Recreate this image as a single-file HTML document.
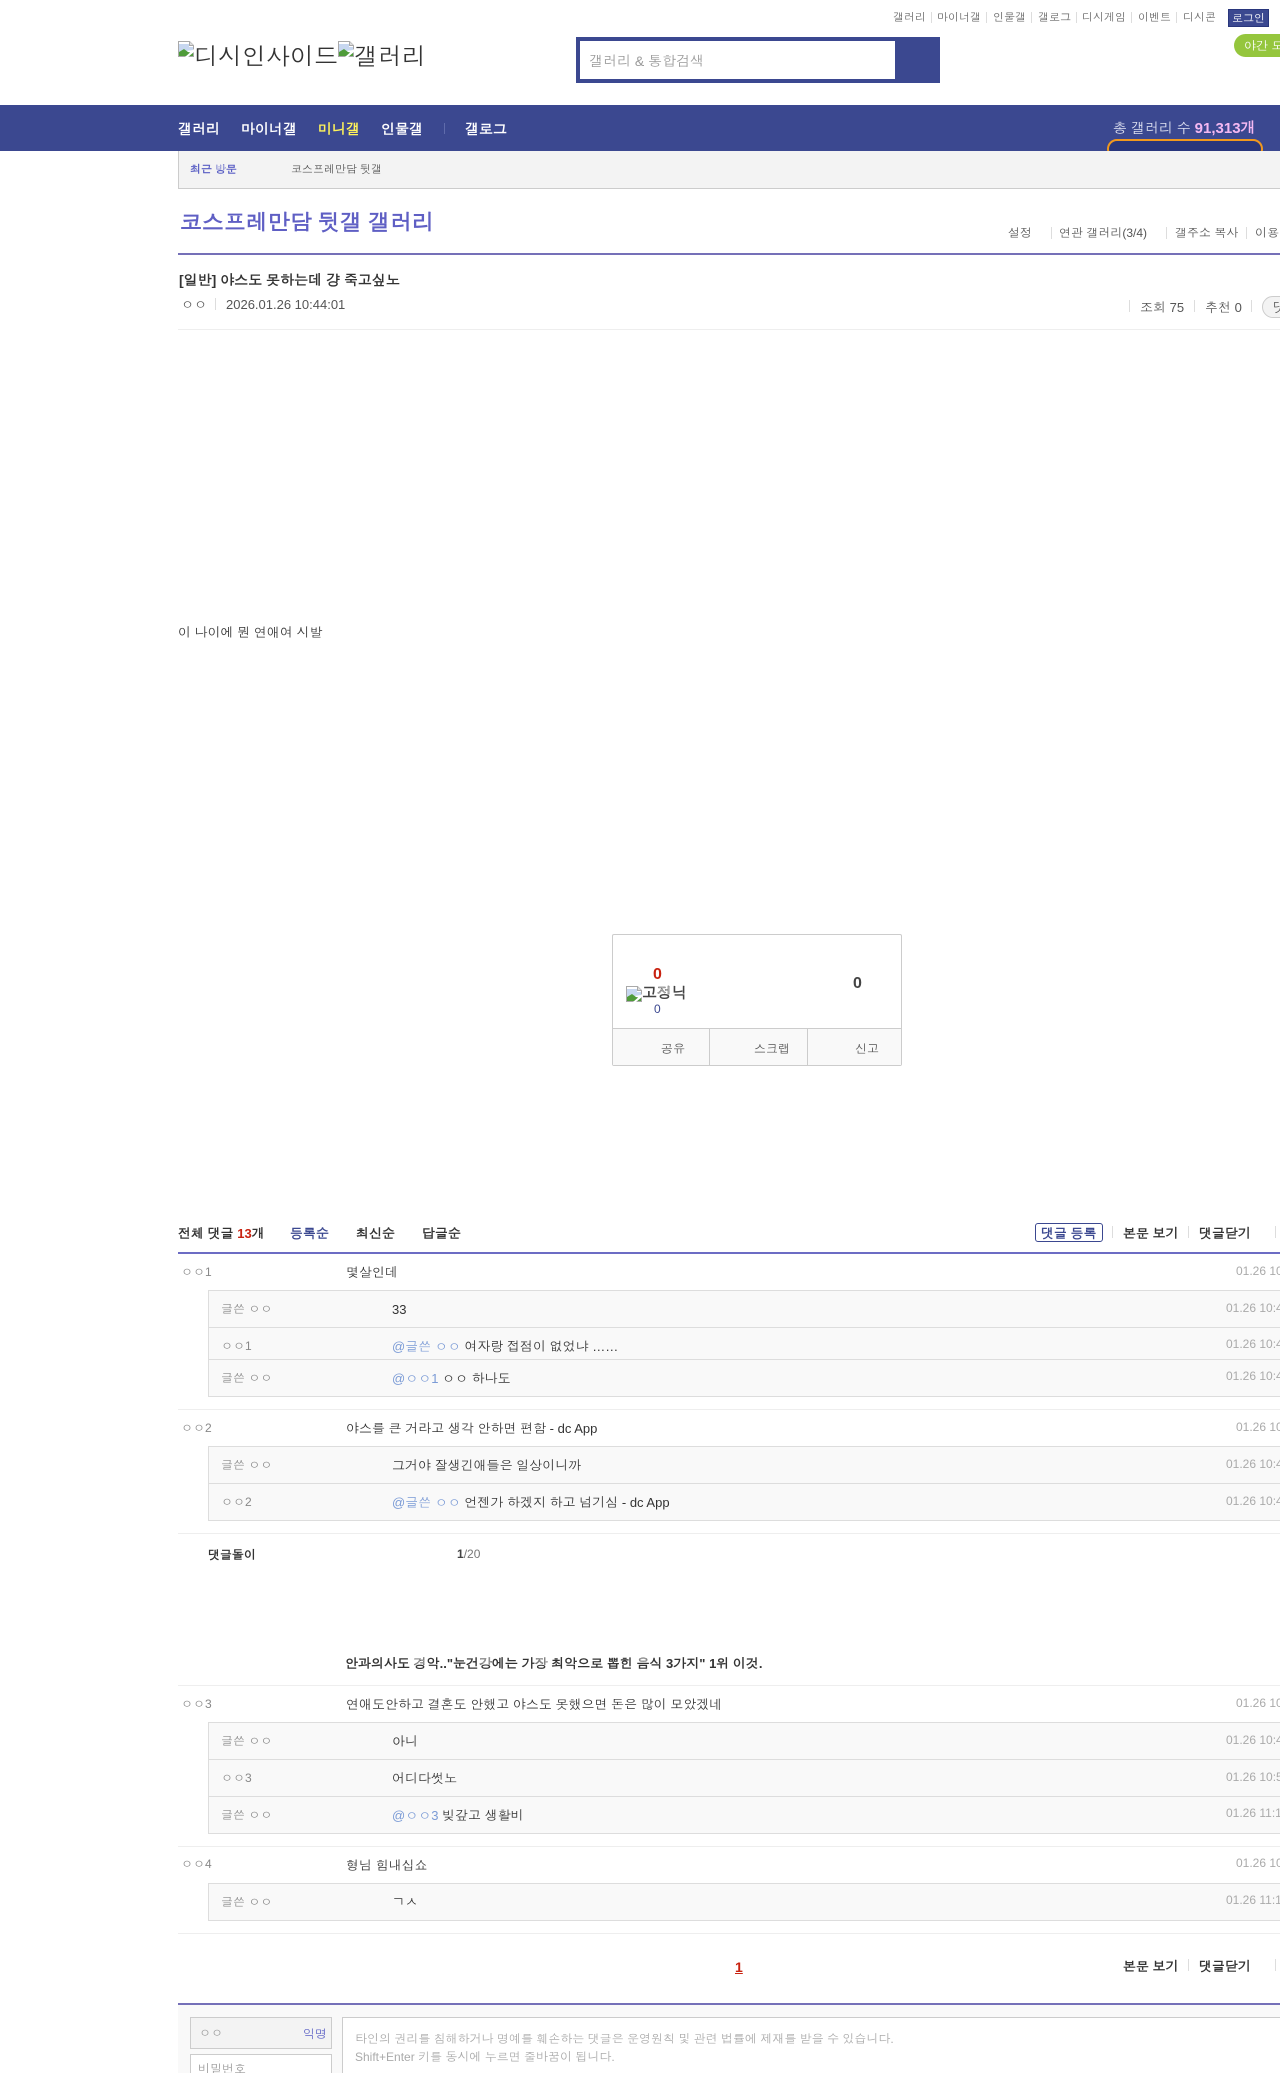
<!DOCTYPE html>
<html lang="ko"><head><meta charset="utf-8"><title>야스도 못하는데 걍 죽고싶노</title>
<style>
html,body{margin:0;padding:0;background:#fff;width:1280px;height:2073px;overflow:hidden}
#w{width:1280px;height:2073px;position:relative;overflow:hidden;font-family:"Liberation Sans",Dotum,sans-serif;font-size:13px;color:#333}
.t{position:absolute;white-space:nowrap;line-height:20px;height:20px}
.r{position:absolute}
.b{font-weight:bold}
.sep{position:absolute;width:1px;background:#ddd}
.top{font-size:11px;color:#666}
.n{font-size:14px;font-weight:bold;color:#fff}
.nm{font-size:12px;color:#888}
.dt{font-size:12px;color:#aaa}
.tx{font-size:13px;color:#333}
.at{color:#7b9bd6}
.rb{position:absolute;left:208px;right:-2px;background:#f9f9f9;border:1px solid #ddd;box-sizing:border-box}
.ln{position:absolute;left:178px;right:0;height:1px;background:#eee}
.il{position:absolute;left:209px;right:0;height:1px;background:#ddd}
.hd{font-size:13px;font-weight:bold;color:#333}
svg.bi{position:absolute;width:16px;height:16px}
</style></head><body><div id="w">

<svg width="0" height="0" style="position:absolute"><defs><symbol id="bk" viewBox="0 0 16 16"><path d="M.5.5h11l4 4v11H.5z" fill="#fff" stroke="#a9a9a9"/><path d="M11.5.5v4h4" fill="#ddd" stroke="#a9a9a9"/><path d="M1 3h10v3h4v3L1 11z" fill="#c7d7f0"/><path d="M1 15v-4l5-3 4 3 5 1v3z" fill="#4f9b3a"/><path d="M16 8 7 16h3l6-5z" fill="#fff"/></symbol></defs></svg>

<!-- top links -->
<div class="t top" style="left:893px;top:8px">갤러리</div><div class="sep" style="left:931px;top:12px;height:11px"></div>
<div class="t top" style="left:937px;top:8px">마이너갤</div><div class="sep" style="left:986px;top:12px;height:11px"></div>
<div class="t top" style="left:993px;top:8px">인물갤</div><div class="sep" style="left:1031px;top:12px;height:11px"></div>
<div class="t top" style="left:1038px;top:8px">갤로그</div><div class="sep" style="left:1076px;top:12px;height:11px"></div>
<div class="t top" style="left:1082px;top:8px">디시게임</div><div class="sep" style="left:1131px;top:12px;height:11px"></div>
<div class="t top" style="left:1138px;top:8px">이벤트</div><div class="sep" style="left:1176px;top:12px;height:11px"></div>
<div class="t top" style="left:1183px;top:8px">디시콘</div>
<div class="r" style="left:1228px;top:9px;width:41px;height:18px;background:#3b4890;border:1px solid #29367c;box-sizing:border-box"></div>
<div class="t" style="left:1232px;top:9px;font-size:11px;color:#fff">로그인</div>
<div class="r" style="left:1234px;top:34px;width:70px;height:23px;background:#95c63d;border-radius:12px"></div>
<div class="t" style="left:1244px;top:36px;font-size:12px;color:#fff">야간 모드</div>

<!-- logo -->
<svg class="bi" style="left:178px;top:41px"><use href="#bk"/></svg>
<div class="t" style="left:194px;top:48px;font-size:24px;color:#333">디시인사이드</div>
<svg class="bi" style="left:338px;top:41px"><use href="#bk"/></svg>
<div class="t" style="left:354px;top:48px;font-size:24px;color:#333">갤러리</div>

<!-- search -->
<div class="r" style="left:576px;top:37px;width:364px;height:46px;background:#3b4890"></div>
<div class="r" style="left:580px;top:41px;width:315px;height:38px;background:#fff"></div>
<div class="t" style="left:589px;top:51px;font-size:14px;color:#999">갤러리 &amp; 통합검색</div>

<!-- nav -->
<div class="r" style="left:0;top:105px;width:1280px;height:46px;background:#3b4890"></div>
<div class="t n" style="left:178px;top:119px">갤러리</div>
<div class="t n" style="left:241px;top:119px">마이너갤</div>
<div class="t n" style="left:318px;top:119px;color:#fff35a">미니갤</div>
<div class="t n" style="left:381px;top:119px">인물갤</div>
<div class="r" style="left:444px;top:123px;width:1px;height:11px;background:#5f6bab"></div>
<div class="t n" style="left:465px;top:119px">갤로그</div>
<div class="t" style="left:1113px;top:118px;font-size:14px;color:#dfe2f2">총 갤러리 수 <span class="b" style="color:#f4b8f2;font-size:15px">91,313개</span></div>
<div class="r" style="left:1107px;top:139px;width:156px;height:20px;background:#29367c;border:2px solid #f0981e;border-radius:12px;box-sizing:border-box;clip-path:inset(0 0 8px 0)"></div>

<!-- visited -->
<div class="r" style="left:178px;top:151px;right:0;height:38px;background:#f3f3f3;border-left:1px solid #ccc;border-bottom:1px solid #ccc;box-sizing:border-box"></div>
<div class="t b" style="left:190px;top:160px;font-size:11px;color:#5a5fc4">최근 방문</div>
<div class="t" style="left:291px;top:160px;font-size:11px;color:#555">코스프레만담 뒷갤</div>

<!-- title -->
<div class="t b" style="left:180px;top:213px;font-size:22px;color:#5f5fc4">코스프레만담 뒷갤 갤러리</div>
<div class="t" style="left:1008px;top:223px;font-size:12px;color:#555">설정</div><div class="sep" style="left:1051px;top:227px;height:12px"></div>
<div class="t" style="left:1059px;top:223px;font-size:12px;color:#555">연관 갤러리(3/4)</div><div class="sep" style="left:1166px;top:227px;height:12px"></div>
<div class="t" style="left:1175px;top:223px;font-size:12px;color:#555">갤주소 복사</div><div class="sep" style="left:1246px;top:227px;height:12px"></div>
<div class="t" style="left:1255px;top:223px;font-size:12px;color:#555">이용</div>
<div class="r" style="left:178px;top:253px;right:0;height:2px;background:#7570b8"></div>

<!-- post head -->
<div class="t b" style="left:179px;top:270px;font-size:14px;color:#333">[일반] 야스도 못하는데 걍 죽고싶노</div>
<div class="t" style="left:181px;top:295px;font-size:13px;color:#555">ㅇㅇ</div>
<div class="sep" style="left:215px;top:298px;height:12px"></div>
<div class="t" style="left:226px;top:295px;font-size:13px;color:#555">2026.01.26 10:44:01</div>
<div class="sep" style="left:1129px;top:300px;height:12px"></div>
<div class="t" style="left:1140px;top:298px;font-size:13px;color:#555">조회 75</div>
<div class="sep" style="left:1194px;top:300px;height:12px"></div>
<div class="t" style="left:1205px;top:298px;font-size:13px;color:#555">추천 0</div>
<div class="sep" style="left:1251px;top:300px;height:12px"></div>
<div class="r" style="left:1262px;top:296px;width:60px;height:22px;background:#f3f3f3;border:1px solid #ccc;border-radius:11px;box-sizing:border-box"></div>
<div class="t" style="left:1273px;top:298px;font-size:13px;color:#555">댓글 0</div>
<div class="ln" style="top:329px"></div>

<!-- body -->
<div class="t" style="left:178px;top:623px;font-size:13px;color:#333">이 나이에 뭔 연애여 시발</div>

<!-- recommend -->
<div class="r" style="left:612px;top:934px;width:290px;height:132px;border:1px solid #ccc;border-radius:2px;box-sizing:border-box"></div>
<div class="r" style="left:613px;top:1028px;width:288px;height:37px;background:#f9f9f9;border-top:1px solid #ccc;box-sizing:border-box"></div>
<div class="r" style="left:709px;top:1029px;width:1px;height:36px;background:#ccc"></div>
<div class="r" style="left:807px;top:1029px;width:1px;height:36px;background:#ccc"></div>
<div class="t b" style="left:653px;top:965px;font-size:16px;color:#c82210">0</div>
<svg class="bi" style="left:626px;top:986px"><use href="#bk"/></svg>
<div class="t b" style="left:642px;top:984px;font-size:15px;color:#444">고정닉</div>
<div class="t" style="left:654px;top:999px;font-size:12px;color:#3b4890">0</div>
<div class="t b" style="left:853px;top:974px;font-size:16px;color:#444">0</div>
<div class="t" style="left:661px;top:1039px;font-size:12px;color:#555">공유</div>
<div class="t" style="left:754px;top:1039px;font-size:12px;color:#555">스크랩</div>
<div class="t" style="left:855px;top:1039px;font-size:12px;color:#555">신고</div>

<!-- comments head -->
<div class="t hd" style="left:178px;top:1224px">전체 댓글 <span style="color:#c82210">13</span>개</div>
<div class="t hd" style="left:290px;top:1224px;color:#3b4890">등록순</div>
<div class="t hd" style="left:356px;top:1224px">최신순</div>
<div class="t hd" style="left:422px;top:1224px">답글순</div>
<div class="r" style="left:1035px;top:1223px;width:68px;height:19px;border:1px solid #3b4890;border-radius:3px;box-sizing:border-box"></div>
<div class="t hd" style="left:1041px;top:1224px;color:#3b4890">댓글 등록</div>
<div class="sep" style="left:1112px;top:1226px;height:12px"></div>
<div class="t hd" style="left:1123px;top:1224px">본문 보기</div>
<div class="sep" style="left:1188px;top:1226px;height:12px"></div>
<div class="t hd" style="left:1199px;top:1224px">댓글닫기</div>
<div class="sep" style="left:1275px;top:1226px;height:12px"></div>
<div class="r" style="left:178px;top:1252px;right:0;height:2px;background:#6c6cc4"></div>

<!-- c1 -->
<div class="t nm" style="left:181px;top:1262px">ㅇㅇ1</div>
<div class="t tx" style="left:346px;top:1263px">몇살인데</div>
<div class="t dt" style="left:1236px;top:1261px">01.26 10:44:55</div>
<div class="rb" style="top:1290px;height:107px"></div>
<div class="il" style="top:1327px"></div><div class="il" style="top:1359px"></div>
<div class="t nm" style="left:221px;top:1299px">글쓴 ㅇㅇ</div>
<div class="t tx" style="left:392px;top:1300px">33</div>
<div class="t dt" style="left:1226px;top:1298px">01.26 10:45:12</div>
<div class="t nm" style="left:221px;top:1336px">ㅇㅇ1</div>
<div class="t tx" style="left:392px;top:1337px"><span class="at">@글쓴 ㅇㅇ</span> 여자랑 접점이 없었냐 ……</div>
<div class="t dt" style="left:1226px;top:1334px">01.26 10:46:01</div>
<div class="t nm" style="left:221px;top:1368px">글쓴 ㅇㅇ</div>
<div class="t tx" style="left:392px;top:1369px"><span class="at">@ㅇㅇ1</span> ㅇㅇ 하나도</div>
<div class="t dt" style="left:1226px;top:1366px">01.26 10:47:33</div>
<div class="ln" style="top:1409px"></div>

<!-- c2 -->
<div class="t nm" style="left:181px;top:1418px">ㅇㅇ2</div>
<div class="t tx" style="left:346px;top:1419px">야스를 큰 거라고 생각 안하면 편함 - dc App</div>
<div class="t dt" style="left:1236px;top:1417px">01.26 10:46:20</div>
<div class="rb" style="top:1446px;height:75px"></div>
<div class="il" style="top:1483px"></div>
<div class="t nm" style="left:221px;top:1455px">글쓴 ㅇㅇ</div>
<div class="t tx" style="left:392px;top:1456px">그거야 잘생긴애들은 일상이니까</div>
<div class="t dt" style="left:1226px;top:1454px">01.26 10:47:40</div>
<div class="t nm" style="left:221px;top:1492px">ㅇㅇ2</div>
<div class="t tx" style="left:392px;top:1493px"><span class="at">@글쓴 ㅇㅇ</span> 언젠가 하겠지 하고 넘기심 - dc App</div>
<div class="t dt" style="left:1226px;top:1491px">01.26 10:48:15</div>
<div class="ln" style="top:1533px"></div>

<!-- ad -->
<div class="t b" style="left:208px;top:1545px;font-size:12px;color:#333">댓글돌이</div>
<div class="t" style="left:457px;top:1544px;font-size:12px;color:#777"><span class="b" style="color:#444">1</span>/20</div>
<div class="t b" style="left:345px;top:1654px;font-size:13px;color:#333">안과의사도 경악.."눈건강에는 가장 최악으로 뽑힌 음식 3가지" 1위 이것.</div>
<div class="ln" style="top:1685px"></div>

<!-- c3 -->
<div class="t nm" style="left:181px;top:1694px">ㅇㅇ3</div>
<div class="t tx" style="left:346px;top:1695px">연애도안하고 결혼도 안했고 야스도 못했으면 돈은 많이 모았겠네</div>
<div class="t dt" style="left:1236px;top:1693px">01.26 10:49:08</div>
<div class="rb" style="top:1722px;height:112px"></div>
<div class="il" style="top:1759px"></div><div class="il" style="top:1796px"></div>
<div class="t nm" style="left:221px;top:1731px">글쓴 ㅇㅇ</div>
<div class="t tx" style="left:392px;top:1732px">아니</div>
<div class="t dt" style="left:1226px;top:1730px">01.26 10:49:50</div>
<div class="t nm" style="left:221px;top:1768px">ㅇㅇ3</div>
<div class="t tx" style="left:392px;top:1769px">어디다썻노</div>
<div class="t dt" style="left:1226px;top:1767px">01.26 10:50:21</div>
<div class="t nm" style="left:221px;top:1805px">글쓴 ㅇㅇ</div>
<div class="t tx" style="left:392px;top:1806px"><span class="at">@ㅇㅇ3</span> 빚갚고 생활비</div>
<div class="t dt" style="left:1226px;top:1803px">01.26 11:12:02</div>
<div class="ln" style="top:1846px"></div>

<!-- c4 -->
<div class="t nm" style="left:181px;top:1854px">ㅇㅇ4</div>
<div class="t tx" style="left:346px;top:1856px">형님 힘내십쇼</div>
<div class="t dt" style="left:1236px;top:1853px">01.26 10:52:44</div>
<div class="rb" style="top:1883px;height:38px"></div>
<div class="t nm" style="left:221px;top:1892px">글쓴 ㅇㅇ</div>
<div class="t tx" style="left:392px;top:1892px">ㄱㅅ</div>
<div class="t dt" style="left:1226px;top:1890px">01.26 11:13:09</div>
<div class="ln" style="top:1933px"></div>

<!-- pager -->
<div class="t b" style="left:735px;top:1957px;font-size:14px;color:#c82210;text-decoration:underline">1</div>
<div class="t hd" style="left:1123px;top:1957px">본문 보기</div>
<div class="sep" style="left:1188px;top:1959px;height:12px"></div>
<div class="t hd" style="left:1199px;top:1957px">댓글닫기</div>
<div class="sep" style="left:1275px;top:1959px;height:12px"></div>

<!-- write -->
<div class="r" style="left:178px;top:2003px;right:0;height:70px;background:#f9f9f9;border-top:2px solid #7570b8;box-sizing:border-box"></div>
<div class="r" style="left:190px;top:2017px;width:142px;height:32px;background:#f3f3f3;border:1px solid #ccc;box-sizing:border-box"></div>
<div class="t" style="left:199px;top:2023px;font-size:12px;color:#999">ㅇㅇ</div>
<div class="t" style="left:303px;top:2024px;font-size:12px;color:#5a5fc4">익명</div>
<div class="r" style="left:190px;top:2054px;width:142px;height:30px;background:#fff;border:1px solid #ccc;box-sizing:border-box"></div>
<div class="t" style="left:198px;top:2059px;font-size:12px;color:#999">비밀번호</div>
<div class="r" style="left:342px;top:2017px;right:-2px;height:70px;background:#fff;border:1px solid #ccc;box-sizing:border-box"></div>
<div class="t" style="left:355px;top:2029px;font-size:12px;color:#aaa">타인의 권리를 침해하거나 명예를 훼손하는 댓글은 운영원칙 및 관련 법률에 제재를 받을 수 있습니다.</div>
<div class="t" style="left:355px;top:2047px;font-size:12px;color:#aaa">Shift+Enter 키를 동시에 누르면 줄바꿈이 됩니다.</div>
</div></body></html>
